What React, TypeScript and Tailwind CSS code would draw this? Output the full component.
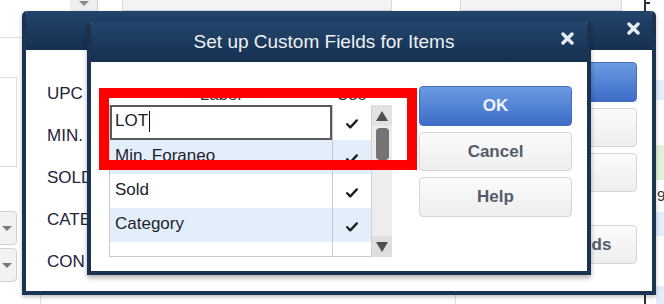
import React from 'react';

const CloseX = ({ size = 13 }: { size?: number }) => (
  <svg width={size} height={size} viewBox="0 0 13 13">
    <path d="M2 2 L11 11 M11 2 L2 11" stroke="#e8ebf0" strokeWidth="3.4" strokeLinecap="round" />
  </svg>
);

const Check = () => (
  <svg width="12" height="10" viewBox="0 0 12 10">
    <path d="M1.2 5.2 L4.3 8.4 L10.8 1.4" stroke="#1e1e1e" strokeWidth="2.3" fill="none" strokeLinecap="round" strokeLinejoin="round" />
  </svg>
);

const rows = [
  { label: 'LOT', blue: false, editing: true },
  { label: 'Min. Foraneo', blue: true },
  { label: 'Sold', blue: false },
  { label: 'Category', blue: true },
];

const GrayButton = ({ children, className = '' }: { children?: React.ReactNode; className?: string }) => (
  <div
    className={`flex items-center justify-center rounded-[4px] border border-[#d4d4d4] bg-gradient-to-b from-[#fbfbfb] to-[#eeeeee] text-[17px] font-bold text-[#535c6a] ${className}`}
  >
    {children}
  </div>
);

const App = () => {
  return (
    <div className="relative h-[304px] w-[664px] overflow-hidden bg-white font-['Liberation_Sans',Arial,sans-serif]">
      {/* background app behind the dialogs */}
      <div className="absolute left-[70px] top-0 flex h-[11px] w-[27px] items-start justify-center bg-[#eeeeee]">
        <div className="mt-[1px] h-0 w-0 border-x-[5px] border-t-[5px] border-x-transparent border-t-[#8a8a8a]" />
      </div>
      <div className="absolute left-[97px] top-0 h-[11px] w-px bg-[#d0d0d0]" />
      <div className="absolute left-[122px] top-0 h-[11px] w-[270px] border-x border-b border-[#dadada] bg-[#f3f3f3]" />
      <div className="absolute left-[460px] top-0 h-[11px] w-[162px] border-x border-b border-[#d6d6d6] bg-[#f3f3f3]" />
      <div className="absolute left-[644px] top-0 h-[12px] w-[2px] bg-[#2a3240]" />
      <div className="absolute left-[646px] top-[2px] h-[2px] w-[4px] bg-[#2a3240]" />
      <div className="absolute left-0 top-[37px] h-px w-[22px] bg-[#dddddd]" />
      <div className="absolute left-[-2px] top-[77px] h-[90px] w-[19px] border border-[#dddddd] bg-white" />
      <div className="absolute left-[-6px] top-[211px] flex h-[34px] w-[23px] items-center rounded-[4px] border border-[#d2d2d2] bg-[#f2f2f2] pl-[7px]">
        <div className="h-0 w-0 border-x-[5px] border-t-[5px] border-x-transparent border-t-[#7a7a7a]" />
      </div>
      <div className="absolute left-[-6px] top-[248px] flex h-[34px] w-[23px] items-center rounded-[4px] border border-[#d2d2d2] bg-[#f2f2f2] pl-[7px]">
        <div className="h-0 w-0 border-x-[5px] border-t-[5px] border-x-transparent border-t-[#7a7a7a]" />
      </div>
      <div className="absolute left-[40px] top-[294px] h-[10px] w-px bg-[#dddddd]" />
      <div className="absolute left-[455px] top-[294px] h-[10px] w-px bg-[#dddddd]" />
      <div className="absolute left-[644px] top-[292px] h-[12px] w-[2px] bg-[#2a3240]" />
      <div className="absolute left-[656px] top-[80px] h-[20px] w-[8px] bg-[#e4eefb]" />
      <div className="absolute left-[656px] top-[145px] h-[35px] w-[8px] bg-[#e2f2da]" />
      <div className="absolute left-[656px] top-[212px] h-[24px] w-[8px] bg-[#e4eefb]" />
      <div className="absolute left-[656px] top-[286px] h-[18px] w-[8px] bg-[#e4eefb]" />
      <div className="absolute left-[657px] top-[188px] text-[15px] leading-none text-[#333]">9</div>

      {/* outer dialog */}
      <div className="absolute left-[22px] top-[11px] flex h-[284px] w-[634px] flex-col overflow-hidden rounded-t-[5px] border-[4px] border-t-0 border-[#1c3453] bg-white shadow-[0_2px_4px_rgba(0,0,0,0.25)]">
        <div className="flex h-[39px] shrink-0 items-start justify-end bg-gradient-to-b from-[#22456c] to-[#163050] pr-[12px] pt-[11px]">
          <CloseX />
        </div>
        <div className="flex flex-1 justify-between pl-[21px] pr-[15px]">
          {/* field labels, cut off where the front dialog covers them */}
          <div className="flex w-[40px] flex-col gap-[25px] overflow-hidden whitespace-nowrap pt-[35px] text-[17px] leading-[17px] text-[#23233a]">
            <span>UPC</span>
            <span>MIN.</span>
            <span>SOLD</span>
            <span>CATE</span>
            <span>CON</span>
          </div>
          <div className="flex w-[157px] flex-col pt-[12px]">
            <div className="h-[40px] rounded-[4px] border border-[#4470c0] bg-gradient-to-b from-[#6b9be1] to-[#3e6cc8]" />
            <GrayButton className="mt-[6px] h-[39px]" />
            <GrayButton className="mt-[6px] h-[39px]" />
            <GrayButton className="mt-[33px] h-[39px]">Define Fields</GrayButton>
          </div>
        </div>
      </div>

      {/* inner dialog: Set up Custom Fields for Items */}
      <div className="absolute left-[87px] top-[22px] flex h-[253px] w-[504px] flex-col overflow-hidden rounded-t-[5px] border-[4px] border-t-0 border-[#1b3351] bg-white shadow-[0_3px_5px_rgba(0,0,0,0.3)]">
        <div className="relative flex h-[40px] shrink-0 items-center justify-center bg-gradient-to-b from-[#22456c] to-[#163050] pr-[30px]">
          <span className="text-[19px] text-[#eef1f5]">Set up Custom Fields for Items</span>
          <div className="absolute right-[13px] top-[10px]">
            <CloseX />
          </div>
        </div>
        <div className="flex flex-1 pl-[18px] pt-[24px]">
          {/* table */}
          <div className="flex w-[283px] flex-col">
            <div className="flex h-[19px] text-[17px] leading-[17px] text-[#333]">
              <div className="w-[223px] text-center">Label</div>
              <div className="w-[39px] text-center">Use</div>
            </div>
            <div className="flex">
              <div className="flex w-[262px] flex-col border-b border-l border-[#c9c9c9]">
                {rows.map((r) => (
                  <div
                    key={r.label}
                    className={`flex ${r.editing ? 'h-[35px]' : 'h-[34px]'} ${r.blue ? 'bg-[#e3eefb]' : 'bg-white'}`}
                  >
                    <div
                      className={`flex w-[222px] items-center pb-[3px] text-[17px] text-[#1e1e2e] ${
                        r.editing ? 'border-2 border-[#5a5a5a] bg-white pl-[3px]' : 'pl-[5px]'
                      }`}
                    >
                      {r.label}
                      {r.editing && <span className="ml-[1px] inline-block h-[21px] w-px bg-[#111]" />}
                    </div>
                    <div className="flex flex-1 items-center justify-center border-l border-[#c9c9c9] pt-[3px]">
                      <Check />
                    </div>
                  </div>
                ))}
                <div className="flex h-[14px]">
                  <div className="w-[222px]" />
                  <div className="flex-1 border-l border-[#c9c9c9]" />
                </div>
              </div>
              {/* scrollbar */}
              <div className="flex w-[21px] flex-col border-l border-[#d0d0d0] bg-[#ededed]">
                <div className="flex h-[21px] items-center justify-center bg-[#e2e2e2]">
                  <div className="h-0 w-0 border-x-[6px] border-b-[10px] border-x-transparent border-b-[#4f4f4f]" />
                </div>
                <div className="mx-auto mt-[2px] h-[32px] w-[13px] rounded-[4px] bg-[#747474]" />
                <div className="flex-1" />
                <div className="flex h-[21px] items-center justify-center bg-[#dedede]">
                  <div className="h-0 w-0 border-x-[6px] border-t-[10px] border-x-transparent border-t-[#4f4f4f]" />
                </div>
              </div>
            </div>
          </div>
          {/* buttons */}
          <div className="ml-[27px] flex w-[153px] flex-col">
            <div className="flex h-[40px] items-center justify-center rounded-[4px] border border-[#4470c0] bg-gradient-to-b from-[#6b9be1] to-[#3e6cc8] text-[17px] font-bold text-[#eef3fb]">
              OK
            </div>
            <GrayButton className="mt-[6px] h-[39px]">Cancel</GrayButton>
            <GrayButton className="mt-[6px] h-[40px]">Help</GrayButton>
          </div>
        </div>
      </div>

      {/* red highlight */}
      <div className="absolute left-[99px] top-[88px] h-[82px] w-[318px] border-[10px] border-[#ff0000]" />
    </div>
  );
};

export default App;
